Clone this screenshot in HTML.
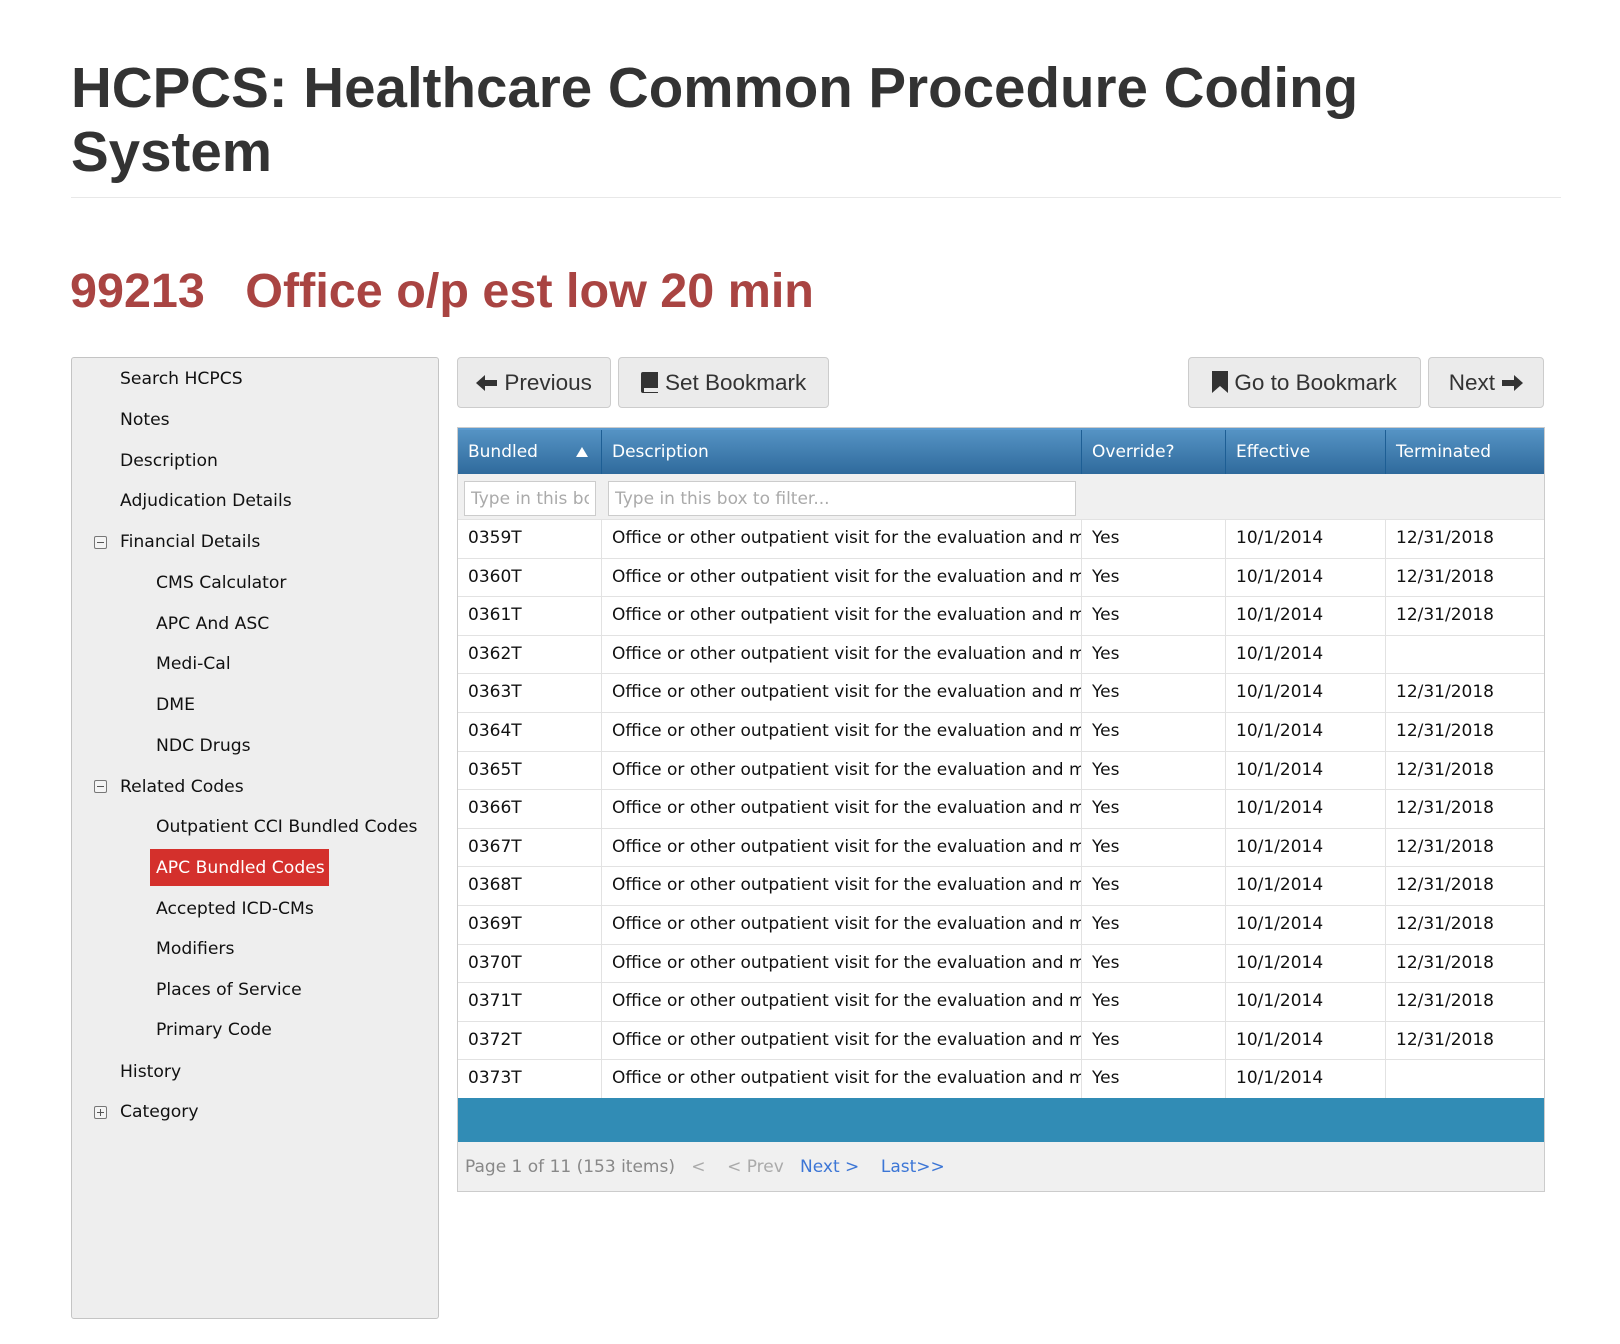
<!DOCTYPE html>
<html><head><meta charset="utf-8"><style>
body{margin:0;background:#fff;width:1620px;height:1344px;overflow:hidden;position:relative;font-family:"DejaVu Sans","Liberation Sans",sans-serif;color:#111}
.abs{position:absolute}
h1{position:absolute;left:71px;top:56px;margin:0;font:bold 56.5px/64px "Liberation Sans",sans-serif;color:#333;width:1460px}
.hr{left:71px;top:197px;width:1490px;height:1px;background:#e8e8e8}
h2{position:absolute;left:70px;top:262px;margin:0;font:bold 48.5px/58px "Liberation Sans",sans-serif;color:#a94442;white-space:pre}
.side{left:71px;top:357px;width:368px;height:962px;background:#eee;border:1px solid #c4c4c4;border-radius:3px;box-sizing:border-box}
.it{position:absolute;font-size:17.2px;line-height:24px;white-space:nowrap}
.box{position:absolute;width:11px;height:11px;border:1px solid #777;border-radius:2px;background:#f4f4f4}
.box:after{content:"";position:absolute;left:2px;top:5px;width:7px;height:1px;background:#555}
.box.p:before{content:"";position:absolute;left:5px;top:2px;width:1px;height:7px;background:#555}
.btn{position:absolute;top:357px;height:51px;background:#ebebeb;border:1px solid #ccc;border-radius:4px;box-sizing:border-box;font:22.5px/49px "Liberation Sans",sans-serif;color:#333;text-align:center;white-space:nowrap}
.tbl{left:457px;top:427px;width:1094px;height:765px;border:1px solid #ccc;box-sizing:border-box;background:#f0f0f0}
.hd{position:absolute;left:0;top:0;width:1092px;height:46px;background:linear-gradient(#5593c4,#2f6a9c);border-top:2px solid #5a9ad0;box-sizing:border-box}
.hc{position:absolute;top:0;height:44px;color:#fff;font-size:17px;line-height:44px;padding-left:10px;box-sizing:border-box;border-right:1px solid #1d5e94}
.row{position:absolute;left:0;width:1092px;height:38.6px;background:#fff;border-top:1px solid #e2e2e2;box-sizing:border-box}
.c{position:absolute;top:0;height:38px;font-size:17px;line-height:37px;padding-left:10px;box-sizing:border-box;border-right:1px solid #e2e2e2;overflow:hidden;white-space:nowrap}
input{position:absolute;top:7px;height:35px;border:1px solid #ccc;background:#fff;box-sizing:border-box;font:17px "DejaVu Sans",sans-serif;color:#aaa;padding:0 6px;line-height:33px;overflow:hidden;white-space:nowrap}
</style></head><body>
<h1>HCPCS: Healthcare Common Procedure Coding System</h1>
<div class="abs hr"></div>
<h2>99213   Office o/p est low 20 min</h2>

<div class="abs side"></div>
<div class="abs" style="left:150px;top:849px;width:179px;height:37px;background:#d4302c"></div>
<div class="it" style="left:120px;top:367px">Search HCPCS</div>
<div class="it" style="left:120px;top:408px">Notes</div>
<div class="it" style="left:120px;top:449px">Description</div>
<div class="it" style="left:120px;top:489px">Adjudication Details</div>
<div class="box" style="left:94px;top:536px"></div>
<div class="it" style="left:120px;top:530px">Financial Details</div>
<div class="it" style="left:156px;top:571px">CMS Calculator</div>
<div class="it" style="left:156px;top:612px">APC And ASC</div>
<div class="it" style="left:156px;top:652px">Medi-Cal</div>
<div class="it" style="left:156px;top:693px">DME</div>
<div class="it" style="left:156px;top:734px">NDC Drugs</div>
<div class="box" style="left:94px;top:780px"></div>
<div class="it" style="left:120px;top:775px">Related Codes</div>
<div class="it" style="left:156px;top:815px">Outpatient CCI Bundled Codes</div>
<div class="it" style="left:156px;top:856px;color:#fff">APC Bundled Codes</div>
<div class="it" style="left:156px;top:897px">Accepted ICD-CMs</div>
<div class="it" style="left:156px;top:937px">Modifiers</div>
<div class="it" style="left:156px;top:978px">Places of Service</div>
<div class="it" style="left:156px;top:1018px">Primary Code</div>
<div class="it" style="left:120px;top:1060px">History</div>
<div class="box p" style="left:94px;top:1106px"></div>
<div class="it" style="left:120px;top:1100px">Category</div>

<div class="btn" style="left:457px;width:154px"><svg width="22" height="18" viewBox="0 0 22 18" style="vertical-align:-2px"><path d="M0 9 L9 1 L9 6 L21 6 L21 12 L9 12 L9 17 Z" fill="#333"/></svg> Previous</div>
<div class="btn" style="left:618px;width:211px"><svg width="18" height="22" viewBox="0 0 18 22" style="vertical-align:-3px"><path d="M2 1 H17 V17 H3 V21 H17 V22 H2 Q0 22 0 20 V3 Q0 1 2 1Z" fill="#333"/></svg> Set Bookmark</div>
<div class="btn" style="left:1188px;width:233px"><svg width="16" height="22" viewBox="0 0 16 22" style="vertical-align:-3px"><path d="M0 0 H16 V22 L8 15 L0 22Z" fill="#333"/></svg> Go to Bookmark</div>
<div class="btn" style="left:1428px;width:116px">Next <svg width="22" height="18" viewBox="0 0 22 18" style="vertical-align:-2px"><path d="M22 9 L13 1 L13 6 L1 6 L1 12 L13 12 L13 17 Z" fill="#333"/></svg></div>

<div class="abs tbl" style="width:1088px">
<div class="hd" style="width:1086px">
<div class="hc" style="left:0;width:144px">Bundled<svg width="14" height="12" viewBox="0 0 14 12" style="position:absolute;left:117px;top:16px"><path d="M1 11 L7 1 L13 11Z" fill="#fff"/></svg></div>
<div class="hc" style="left:144px;width:480px">Description</div>
<div class="hc" style="left:624px;width:144px">Override?</div>
<div class="hc" style="left:768px;width:160px">Effective</div>
<div class="hc" style="left:928px;width:158px;border-right:0">Terminated</div>
</div>
<input style="left:6px;width:132px;top:53px" value="Type in this box to filter...">
<input style="left:150px;width:468px;top:53px" value="Type in this box to filter...">
<div id="rows"></div>
<div class="abs" style="left:0;top:670px;width:1086px;height:44px;background:#318cb5"></div>
<div class="abs" style="left:7px;top:715px;height:48px;line-height:48px;font-size:17px;color:#888;white-space:pre">Page 1 of 11 (153 items)   <span style="color:#aaa">&lt;    &lt; Prev</span>   <span style="color:#3c76d6">Next &gt;    Last&gt;&gt;</span></div>
</div>
<script>
var codes=["0359T","0360T","0361T","0362T","0363T","0364T","0365T","0366T","0367T","0368T","0369T","0370T","0371T","0372T","0373T"];
var h="";
codes.forEach(function(c,i){var t=(i==3||i==14)?"":"12/31/2018";
h+='<div class="row" style="width:1086px;top:'+(91+i*38.6)+'px"><div class="c" style="left:0;width:144px">'+c+'</div><div class="c" style="left:144px;width:480px">Office or other outpatient visit for the evaluation and management</div><div class="c" style="left:624px;width:144px">Yes</div><div class="c" style="left:768px;width:160px">10/1/2014</div><div class="c" style="left:928px;width:158px;border-right:0">'+t+'</div></div>';});
document.getElementById("rows").innerHTML=h;
</script>
</body></html>
